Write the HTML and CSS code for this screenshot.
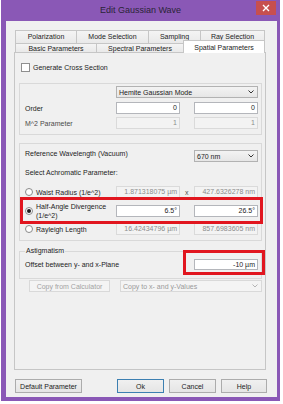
FILE: index.html
```html
<!DOCTYPE html>
<html>
<head>
<meta charset="utf-8">
<title>Edit Gaussian Wave</title>
<link rel="stylesheet" href="styles.css">
</head>
<body>
<div class="window">
  <div class="titlebar">
    <div class="title">Edit Gaussian Wave</div>
    <div class="close"><svg width="8" height="8" viewBox="0 0 8 8"><path d="M1 1L7 7M7 1L1 7" stroke="#fff" stroke-width="1.4"/></svg></div>
  </div>
  <div class="client">
    <div class="tabs">
      <div class="tabrow row1">
        <div class="tab t-pol">Polarization</div>
        <div class="tab t-mode">Mode Selection</div>
        <div class="tab t-samp">Sampling</div>
        <div class="tab t-ray">Ray Selection</div>
      </div>
      <div class="tabrow row2">
        <div class="tab t-basic">Basic Parameters</div>
        <div class="tab t-spec">Spectral Parameters</div>
        <div class="tab t-spat active">Spatial Parameters</div>
      </div>
      <div class="panel">
        <div class="check"><span class="cb"></span><span>Generate Cross Section</span></div>

        <div class="group g1">
          <div class="grid r-sel">
            <div></div>
            <div class="select span3"><span>Hemite Gaussian Mode</span><svg width="6" height="4" viewBox="0 0 6 4"><path d="M0.5 0.5L3 3L5.5 0.5" fill="none" stroke="#333" stroke-width="1"/></svg></div>
          </div>
          <div class="grid r-order">
            <div class="lbl">Order</div>
            <div class="input">0</div>
            <div></div>
            <div class="input">0</div>
          </div>
          <div class="grid r-m2">
            <div class="lbl dim">M^2 Parameter</div>
            <div class="input disabled">1</div>
            <div></div>
            <div class="input disabled">1</div>
          </div>
        </div>

        <div class="group g2">
          <div class="grid r-wave">
            <div class="lbl span3">Reference Wavelength (Vacuum)</div>
            <div class="select"><span>670 nm</span><svg width="6" height="4" viewBox="0 0 6 4"><path d="M0.5 0.5L3 3L5.5 0.5" fill="none" stroke="#333" stroke-width="1"/></svg></div>
          </div>
          <div class="r-achro">Select Achromatic Parameter:</div>
          <div class="grid r-waist">
            <div class="lbl radio-lbl"><span class="radio"></span><span>Waist Radius (1/e^2)</span></div>
            <div class="input disabled">1.871318075 µm</div>
            <div class="times">x</div>
            <div class="input disabled">427.6326278 nm</div>
          </div>
          <div class="grid r-half marked">
            <div class="lbl radio-lbl"><span class="radio on"></span><span class="two">Half-Angle Divergence<br>(1/e^2)</span></div>
            <div class="input">6.5°</div>
            <div></div>
            <div class="input">26.5°</div>
          </div>
          <div class="grid r-ray">
            <div class="lbl radio-lbl"><span class="radio"></span><span>Rayleigh Length</span></div>
            <div class="input disabled">16.42434796 µm</div>
            <div></div>
            <div class="input disabled">857.6983605 nm</div>
          </div>
        </div>

        <fieldset class="astig">
          <legend>Astigmatism</legend>
          <div class="grid r-off">
            <div class="lbl span3">Offset between y- and x-Plane</div>
            <div class="input marked2">-10 µm</div>
          </div>
        </fieldset>

        <div class="copyrow">
          <div class="btn disabled-btn">Copy from Calculator</div>
          <div class="select disabled-sel"><span>Copy to x- and y-Values</span><svg width="6" height="4" viewBox="0 0 6 4"><path d="M0.5 0.5L3 3L5.5 0.5" fill="none" stroke="#b5b5b5" stroke-width="1"/></svg></div>
        </div>
      </div>
    </div>
    <div class="buttons">
      <div class="btn b-default">Default Parameter</div>
      <div class="btn b-ok">Ok</div>
      <div class="btn b-cancel">Cancel</div>
      <div class="btn b-help">Help</div>
    </div>
  </div>
</div>
</body>
</html>
```
FILE: styles.css
```css
html, body {
  margin: 0;
  padding: 0;
  background: #ffffff;
}
body {
  font-family: "Liberation Sans", Arial, sans-serif;
  font-size: 7px;
  color: #1c1c1c;
}
.window {
  width: 279px;
  height: 401px;
  margin-left: 1px;
  background: #8a58b6;
  display: flex;
  flex-direction: column;
}
.titlebar {
  height: 21px;
  display: grid;
  grid-template-columns: 1fr auto 1fr;
}
.title {
  grid-column: 2;
  font-size: 9px;
  color: #2b2436;
  line-height: 21px;
  white-space: nowrap;
}
.close {
  grid-column: 3;
  justify-self: end;
  width: 20px;
  height: 14px;
  margin-top: 1px;
  margin-right: 4px;
  background: #c74f4f;
  display: flex;
  align-items: center;
  justify-content: center;
}
.client {
  flex: 1;
  margin: 0 3px 4px 5px;
  background: #f0f0f0;
  display: flex;
  flex-direction: column;
}
.tabs {
  margin: 9px 11px 0 8px;
}
.tabrow {
  display: flex;
  margin-left: 1px;
}
.row1 { height: 13px; }
.row2 { height: 9px; }
.tab {
  box-sizing: border-box;
  border: 1px solid #c6c6c6;
  border-bottom: 0;
  margin-right: -1px;
  background: linear-gradient(#f4f4f4, #e9e9e9);
  display: flex;
  align-items: center;
  justify-content: center;
  white-space: nowrap;
  color: #222;
}
.row1 .tab {
  align-items: flex-start;
  padding-top: 2px;
  line-height: 8px;
}
.t-pol { width: 62px; }
.t-mode { width: 73px; }
.t-samp { width: 53px; }
.t-ray { width: 65px; }
.t-basic { width: 82px; }
.t-spec { width: 88px; }
.t-spat { width: 82px; }
.tab.active {
  height: 13px;
  margin-top: -3px;
  background: #ffffff;
  position: relative;
  z-index: 1;
}
.panel {
  box-sizing: border-box;
  height: 318px;
  border: 1px solid #c6c6c6;
  background: #f0f0f0;
  padding: 0 3px 0 4px;
}
.check {
  display: flex;
  align-items: center;
  height: 9px;
  margin: 10px 0 0 2px;
}
.cb {
  box-sizing: border-box;
  width: 9px;
  height: 9px;
  border: 1px solid #8f8f8f;
  background: #fff;
  margin-right: 3px;
}
.group {
  border: 1px solid #d9d9d9;
  padding: 0 3px 5px 5px;
}
.g1 { margin-top: 11px; padding-top: 2px; }
.g2 { margin-top: 8px; }
.grid {
  display: grid;
  grid-template-columns: 91px 64px 14px 64px;
  height: 12px;
  align-items: center;
}
.span3 { grid-column: span 3; }
.r-sel .span3 { grid-column: 2 / span 3; }
.r-order { margin-top: 4px; }
.r-m2 { margin-top: 3px; }
.r-wave { margin-top: 6px; }
.r-wave .lbl { align-self: start; }
.r-achro {
  margin-top: 6px;
  height: 10px;
  line-height: 10px;
}
.r-waist { margin-top: 8px; }
.r-half {
  margin-top: 3px;
  height: 19px;
}
.r-ray { margin-top: 3px; }
.lbl { white-space: nowrap; }
.dim { color: #4a4a4a; }
.input {
  box-sizing: border-box;
  height: 12px;
  border: 1px solid #b4b6bb;
  background: #ffffff;
  text-align: right;
  padding-right: 2px;
  line-height: 10px;
  white-space: nowrap;
}
.input.disabled {
  background: #f3f3f3;
  border-color: #dadada;
  color: #8c8c8c;
}
.times {
  padding-left: 5px;
  color: #555;
}
.select {
  box-sizing: border-box;
  height: 12px;
  border: 1px solid #b2b2b2;
  background: linear-gradient(#f3f3f3, #e6e6e6);
  display: flex;
  align-items: center;
  justify-content: space-between;
  padding: 0 3px 0 2px;
  white-space: nowrap;
}
.radio-lbl {
  display: flex;
  align-items: center;
}
.radio {
  box-sizing: border-box;
  width: 8px;
  height: 8px;
  border-radius: 50%;
  border: 1px solid #8a8a8a;
  background: #fff;
  margin-right: 3px;
  flex: none;
  display: flex;
  align-items: center;
  justify-content: center;
}
.radio.on::after {
  content: "";
  width: 4px;
  height: 4px;
  border-radius: 50%;
  background: #1a1a1a;
}
.two { line-height: 9px; }
.marked { position: relative; }
.marked::after {
  content: "";
  position: absolute;
  left: -5px;
  right: -5px;
  top: -4px;
  bottom: -4px;
  border: 3px solid #e1161f;
}
.marked2 { position: relative; }
.marked2::after {
  content: "";
  position: absolute;
  left: -12px;
  right: -8px;
  top: -10px;
  bottom: -6px;
  border: 3px solid #e1161f;
}
.astig {
  margin: 5px 0 0 0;
  padding: 0 3px 8px 5px;
  border: 1px solid #d9d9d9;
  min-width: 0;
}
.astig legend {
  padding: 0 1px;
  height: 10px;
  line-height: 10px;
  color: #1c1c1c;
}
.r-off { margin-top: 3px; height: 11px; }
.r-off .input { height: 11px; line-height: 9px; }
.copyrow {
  display: grid;
  grid-template-columns: 91px 142px;
  margin: 1px 0 0 10px;
  height: 12px;
}
.btn {
  box-sizing: border-box;
  border: 1px solid #acacac;
  background: linear-gradient(#f0f0f0, #e5e5e5);
  display: flex;
  align-items: center;
  justify-content: center;
  white-space: nowrap;
  color: #1c1c1c;
}
.disabled-btn {
  width: 81px;
  height: 12px;
  background: #f4f4f4;
  border-color: #d9d9d9;
  color: #a3a3a3;
}
.disabled-sel {
  background: #f4f4f4;
  border-color: #d9d9d9;
  color: #9a9a9a;
}
.buttons {
  display: flex;
  margin: 9px 0 0 9px;
  height: 14px;
}
.buttons .btn { height: 14px; }
.b-default { width: 67px; }
.b-ok { width: 47px; margin-left: 35px; border-color: #3c7fb1; }
.b-cancel { width: 47px; margin-left: 5px; }
.b-help { width: 46px; margin-left: 5px; }
```
